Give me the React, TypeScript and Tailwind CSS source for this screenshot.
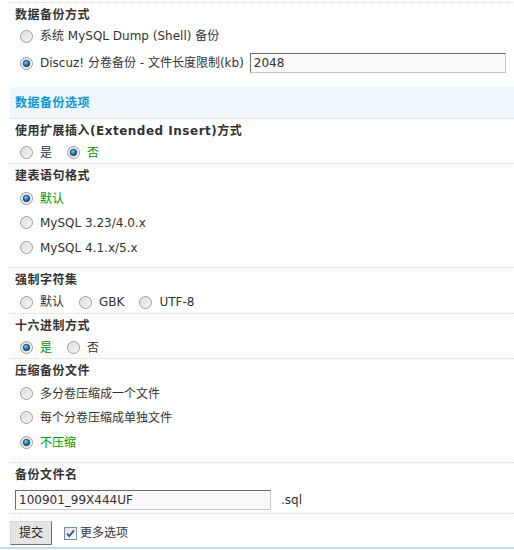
import React from "react";

const FONT = '"DejaVu Sans", Verdana, "Noto Sans CJK SC", sans-serif';

function Radio({ checked }: { checked?: boolean }) {
  return (
    <svg width="13" height="13" viewBox="0 0 13 13" className="shrink-0">
      <defs>
        <linearGradient id="rgu" x1="0" y1="0" x2="1" y2="1">
          <stop offset="0" stopColor="#d8d8d8" />
          <stop offset="1" stopColor="#fbfbfb" />
        </linearGradient>
        <radialGradient id="dot" cx="0.4" cy="0.35" r="0.7">
          <stop offset="0" stopColor="#7fd0f5" />
          <stop offset="0.5" stopColor="#1a7fc0" />
          <stop offset="1" stopColor="#0b3f6c" />
        </radialGradient>
      </defs>
      <circle cx="6.5" cy="6.5" r="6" fill="url(#rgu)" stroke="#9a9a9a" strokeWidth="1" />
      <circle cx="6.5" cy="6.5" r="4.8" fill="none" stroke="#e8e8e8" strokeWidth="0.8" />
      {checked && <circle cx="6.5" cy="6.5" r="3.3" fill="url(#dot)" stroke="#2b2b2b" strokeWidth="0.6" />}
    </svg>
  );
}

function Checkbox() {
  return (
    <svg width="13" height="13" viewBox="0 0 13 13" className="shrink-0">
      <defs>
        <linearGradient id="cbg" x1="0" y1="0" x2="1" y2="1">
          <stop offset="0" stopColor="#dcdcd8" />
          <stop offset="1" stopColor="#ffffff" />
        </linearGradient>
      </defs>
      <rect x="0.5" y="0.5" width="12" height="12" fill="url(#cbg)" stroke="#7a8ea8" />
      <path d="M3 6.5 L5.2 9 L10 3.3" fill="none" stroke="#2a4fb0" strokeWidth="1.8" />
    </svg>
  );
}

function Opt({
  checked,
  plain,
  children,
}: {
  checked?: boolean;
  plain?: boolean;
  children: React.ReactNode;
}) {
  return (
    <span className="flex items-center">
      <Radio checked={checked} />
      <span className={`ml-[7px] ${checked && !plain ? "text-[#009900]" : ""}`}>{children}</span>
    </span>
  );
}

function Title({ children, h = "h-[23px]" }: { children: React.ReactNode; h?: string }) {
  return (
    <div className={`${h} flex items-center pl-[5px] font-bold tracking-[0.5px]`}>{children}</div>
  );
}

function Line({ children, h }: { children: React.ReactNode; h: string }) {
  return <div className={`${h} flex items-center pl-[10px] gap-[15px]`}>{children}</div>;
}

const dot = "border-b border-dotted border-[#c7dbe8]";

export default function App() {
  return (
    <div
      className="w-[514px] h-[550px] bg-white text-[12px] text-[#333] overflow-hidden"
      style={{ fontFamily: FONT }}
    >
      <div className="pl-[10px] pt-[2px]">
        <div className="border-t border-dotted border-[#c7dbe8]" />
        {/* section 1 */}
        <div className="pb-[7px]">
          <Title h="h-[23px]">数据备份方式</Title>
          <Line h="h-[20px]">
            <Opt>系统 MySQL Dump (Shell) 备份</Opt>
          </Line>
          <div className="h-[34px] flex items-center pl-[10px]">
            <Opt checked plain>
              Discuz! 分卷备份 - 文件长度限制(kb)
            </Opt>
            <input
              readOnly
              value="2048"
              className="ml-[6px] w-[256px] h-[20px] px-[3px] bg-[#f9f9f9] text-[#333] outline-none border border-t-[#6e6e6e] border-l-[#6e6e6e] border-b-[#c8c8c8] border-r-[#c8c8c8] text-[12px]"
              style={{ fontFamily: FONT }}
            />
          </div>
        </div>
        {/* band */}
        <div className={`h-[32px] bg-[#f0f7fd] flex items-center pl-[5px] ${dot}`}>
          <span className="font-bold text-[#0b97d4] tracking-[0.5px]">数据备份选项</span>
        </div>
        {/* extended insert */}
        <div className={dot}>
          <Title>使用扩展插入(Extended Insert)方式</Title>
          <Line h="h-[21px]">
            <Opt>是</Opt>
            <Opt checked>否</Opt>
          </Line>
        </div>
        {/* sql compat */}
        <div className={`${dot} pb-[7px]`}>
          <Title>建表语句格式</Title>
          <Line h="h-[23px]">
            <Opt checked>默认</Opt>
          </Line>
          <Line h="h-[25px]">
            <Opt>MySQL 3.23/4.0.x</Opt>
          </Line>
          <Line h="h-[25px]">
            <Opt>MySQL 4.1.x/5.x</Opt>
          </Line>
        </div>
        {/* charset */}
        <div className={dot}>
          <Title>强制字符集</Title>
          <Line h="h-[22px]">
            <Opt>默认</Opt>
            <Opt>GBK</Opt>
            <Opt>UTF-8</Opt>
          </Line>
        </div>
        {/* hex */}
        <div className={dot}>
          <Title>十六进制方式</Title>
          <Line h="h-[21px]">
            <Opt checked>是</Opt>
            <Opt>否</Opt>
          </Line>
        </div>
        {/* compress */}
        <div className={`${dot} pb-[7px]`}>
          <Title>压缩备份文件</Title>
          <Line h="h-[23px]">
            <Opt>多分卷压缩成一个文件</Opt>
          </Line>
          <Line h="h-[25px]">
            <Opt>每个分卷压缩成单独文件</Opt>
          </Line>
          <Line h="h-[25px]">
            <Opt checked>不压缩</Opt>
          </Line>
        </div>
        {/* filename */}
        <div className={dot}>
          <Title h="h-[24px]">备份文件名</Title>
          <div className="h-[26px] flex items-center pl-[5px]">
            <input
              readOnly
              value="100901_99X444UF"
              className="w-[256px] h-[20px] px-[3px] bg-[#f9f9f9] text-[#333] outline-none border border-t-[#6e6e6e] border-l-[#6e6e6e] border-b-[#c8c8c8] border-r-[#c8c8c8] text-[12px]"
              style={{ fontFamily: FONT }}
            />
            <span className="ml-[10px]">.sql</span>
          </div>
        </div>
      </div>
      {/* submit */}
      <div className="h-[35px] flex items-start pt-[7px] pl-[10px] border-b-2 border-[#c4dcec]">
        <button
          className="w-[42px] h-[24px] bg-[#e4e4e4] text-[#222] border border-t-[#d8d8d8] border-l-[#d8d8d8] border-b-[#707070] border-r-[#707070] text-[12px]"
          style={{ fontFamily: FONT }}
        >
          提交
        </button>
        <span className="ml-[12px] h-[24px] flex items-center">
          <Checkbox />
          <span className="ml-[3px]">更多选项</span>
        </span>
      </div>
    </div>
  );
}
